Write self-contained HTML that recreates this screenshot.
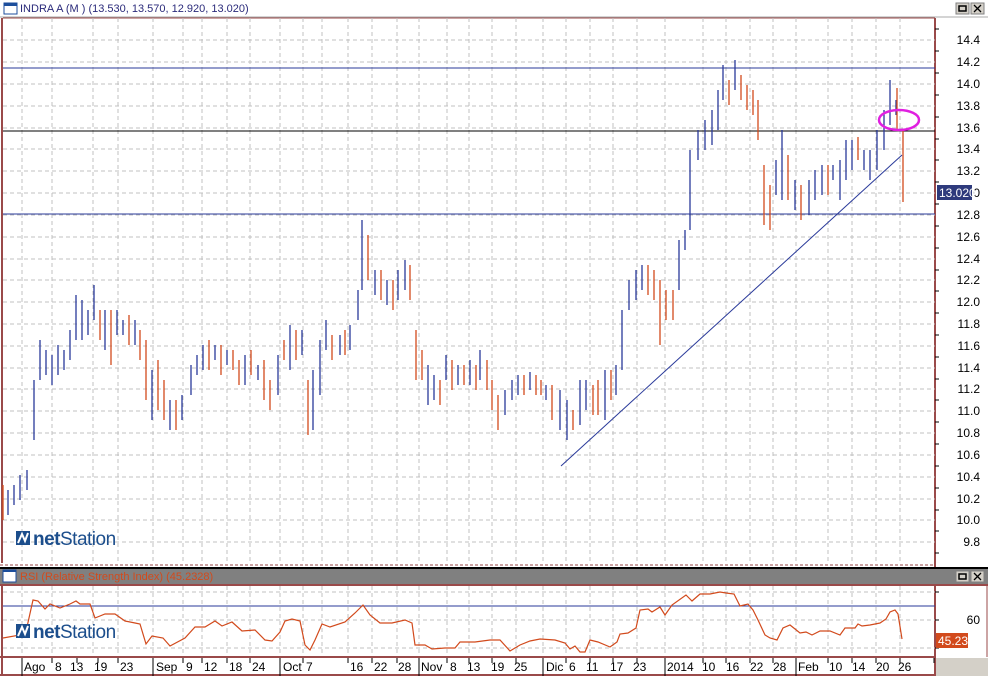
<!DOCTYPE html>
<html><head><meta charset="utf-8"><style>
body{margin:0;width:988px;height:676px;overflow:hidden;background:#fff;font-family:"Liberation Sans",sans-serif}
svg{display:block}
</style></head><body>
<svg width="988" height="676" viewBox="0 0 988 676" xmlns="http://www.w3.org/2000/svg" font-family="Liberation Sans, sans-serif">
<rect width="988" height="676" fill="#fff"/>
<!-- title bar -->
<rect x="4" y="3" width="13" height="11" fill="#fff" stroke="#1c4e9c" stroke-width="1"/>
<rect x="4" y="3" width="13" height="3" fill="#1c4e9c"/>
<text x="20" y="12" font-size="11" fill="#2a2a7a">INDRA A (M ) (13.530, 13.570, 12.920, 13.020)</text>
<g stroke="#808080" fill="#d4d0c8"><rect x="956" y="3" width="13" height="11"/><rect x="971" y="3" width="13" height="11"/></g>
<rect x="959" y="6" width="7" height="5" fill="none" stroke="#000" stroke-width="1.5"/>
<path d="M974 5l7 7M981 5l-7 7" stroke="#000" stroke-width="1.3"/>
<line x1="0" y1="17" x2="988" y2="17" stroke="#aaa"/>
<line x1="3" y1="18" x2="935" y2="18" stroke="#9a4a4a"/>
<line x1="2" y1="18" x2="2" y2="563" stroke="#9a4a4a" stroke-width="2"/>
<line x1="935" y1="18" x2="935" y2="676" stroke="#9a4a4a" stroke-width="2"/>
<!-- grid -->
<g stroke="#c0c0c0" stroke-dasharray="4,3" stroke-width="1">
<path d="M22 18V563M52 18V563M93 18V563M118 18V563M153 18V563M183 18V563M202 18V563M227 18V563M250 18V563M280 18V563M303 18V563M322 18V563M348 18V563M372 18V563M397 18V563M419 18V563M447 18V563M469 18V563M492 18V563M516 18V563M543 18V563M566 18V563M590 18V563M613 18V563M637 18V563M665 18V563M703 18V563M726 18V563M750 18V563M773 18V563M796 18V563M828 18V563M852 18V563M876 18V563M900 18V563"/>
<path d="M3 40H935M3 62H935M3 84H935M3 106H935M3 128H935M3 149H935M3 171H935M3 193H935M3 215H935M3 237H935M3 259H935M3 280H935M3 302H935M3 324H935M3 346H935M3 368H935M3 389H935M3 411H935M3 433H935M3 455H935M3 477H935M3 499H935M3 520H935M3 542H935"/>
<path d="M22 586V657M52 586V657M93 586V657M118 586V657M153 586V657M183 586V657M202 586V657M227 586V657M250 586V657M280 586V657M303 586V657M322 586V657M348 586V657M372 586V657M397 586V657M419 586V657M447 586V657M469 586V657M492 586V657M516 586V657M543 586V657M566 586V657M590 586V657M613 586V657M637 586V657M665 586V657M703 586V657M726 586V657M750 586V657M773 586V657M796 586V657M828 586V657M852 586V657M876 586V657M900 586V657"/>
<path d="M3 592H935M3 620H935M3 648H935"/>
</g>
<line x1="0" y1="565" x2="935" y2="565" stroke="#9a4a4a" stroke-dasharray="3,2"/>
<!-- price axis -->
<g font-size="12" fill="#000" text-anchor="end">
<text x="980" y="44">14.4</text><text x="980" y="66">14.2</text><text x="980" y="88">14.0</text><text x="980" y="110">13.8</text><text x="980" y="132">13.6</text><text x="980" y="153">13.4</text><text x="980" y="175">13.2</text><text x="980" y="197">13.0</text><text x="980" y="219">12.8</text><text x="980" y="241">12.6</text><text x="980" y="263">12.4</text><text x="980" y="284">12.2</text><text x="980" y="306">12.0</text><text x="980" y="328">11.8</text><text x="980" y="350">11.6</text><text x="980" y="372">11.4</text><text x="980" y="393">11.2</text><text x="980" y="415">11.0</text><text x="980" y="437">10.8</text><text x="980" y="459">10.6</text><text x="980" y="481">10.4</text><text x="980" y="503">10.2</text><text x="980" y="524">10.0</text><text x="980" y="546">9.8</text>
</g>
<g stroke="#000"><path d="M935 29h4M935 51h4M935 73h4M935 95h4M935 117h4M935 139h4M935 160h4M935 182h4M935 204h4M935 226h4M935 248h4M935 270h4M935 291h4M935 313h4M935 335h4M935 357h4M935 379h4M935 400h4M935 422h4M935 444h4M935 466h4M935 488h4M935 510h4M935 531h4M935 553h4"/></g>
<rect x="937" y="185" width="35" height="15" fill="#2e3a7c"/>
<text x="939" y="197" font-size="12" fill="#fff">13.020</text>
<!-- level lines -->
<line x1="3" y1="68" x2="935" y2="68" stroke="#2a3a9a"/>
<line x1="3" y1="131" x2="935" y2="131" stroke="#000"/>
<line x1="3" y1="214" x2="935" y2="214" stroke="#2a3a9a"/>
<line x1="561" y1="466" x2="902" y2="155" stroke="#2a3a9a"/>
<!-- bars -->
<path fill="none" stroke="#2a3a9a" stroke-width="1.3" d="M8 490V515M14 485V505M20 475V500M27 470V490M34 380V440M40 340V380M46 350V375M52 355V385M58 345V375M64 350V370M70 330V360M76 295V340M82 300V340M88 310V335M94 285V320M105 310V350M117 310V335M123 320V335M135 320V345M152 370V420M170 400V430M182 395V420M191 365V395M197 355V375M203 345V370M215 345V360M227 350V365M245 355V385M258 365V380M278 355V395M290 325V370M302 330V355M313 370V430M320 340V395M326 320V350M340 335V355M350 325V350M358 290V320M362 220V290M375 270V295M387 280V305M398 270V300M405 260V290M428 365V405M434 375V400M446 355V380M458 365V385M470 360V385M480 350V380M505 390V415M512 380V400M518 375V395M530 372V390M546 385V400M560 390V430M567 400V440M580 380V425M586 380V410M605 370V420M616 365V395M622 310V370M629 280V310M636 270V300M642 265V290M679 240V290M685 230V250M690 150V230M698 130V160M705 120V150M712 110V145M718 90V130M723 65V100M735 60V90M776 160V195M782 130V200M795 180V210M809 180V215M815 170V200M822 165V195M833 165V180M840 160V200M846 140V180M852 140V170M864 150V170M870 150V180M877 130V170M884 110V150M890 80V125M896 100V115"/>
<path fill="none" stroke="#d24a1c" stroke-width="1.3" d="M3 485V520M100 310V340M111 310V365M129 315V345M140 330V360M146 340V400M158 360V410M164 380V420M176 400V430M209 340V370M221 345V375M233 350V370M239 360V385M251 350V375M264 360V400M270 380V410M284 340V360M296 330V360M308 380V435M332 335V360M345 330V355M368 235V280M381 270V300M393 280V310M410 265V300M416 330V380M422 350V380M440 380V405M452 360V390M464 365V385M476 365V390M487 360V390M492 380V410M498 395V430M524 375V395M536 375V395M541 380V395M552 385V420M573 410V430M593 385V415M598 380V415M611 370V400M648 265V295M654 270V300M660 280V345M666 290V320M673 290V320M729 80V105M741 75V100M747 85V110M753 90V115M758 100V140M764 165V225M770 185V230M788 155V200M801 185V220M828 165V195M858 137V160M897 88V130M903 130V202"/>
<ellipse cx="899" cy="120" rx="20" ry="10" fill="none" stroke="#e020e0" stroke-width="2.5"/>
<!-- logo 1 -->
<g transform="translate(16,531)"><rect width="14" height="14" fill="#1c4e8c"/><path d="M2 12L6 3L9 10L12 2" stroke="#fff" stroke-width="2" fill="none"/></g>
<text x="33" y="545" font-size="19" fill="#1c4e8c" letter-spacing="-0.5"><tspan font-weight="bold">net</tspan>Station</text>
<!-- RSI header -->
<rect x="0" y="567" width="988" height="2" fill="#000"/>
<rect x="0" y="569" width="988" height="15" fill="#808080"/>
<rect x="3" y="570" width="13" height="12" fill="#fff" stroke="#1c4e9c"/>
<rect x="3" y="570" width="13" height="2" fill="#1c4e9c"/>
<text x="20" y="580" font-size="11" fill="#d24a1c">RSI (Relative Strength Index) (45.2328)</text>
<g stroke="#808080" fill="#d4d0c8"><rect x="956" y="571" width="13" height="11"/><rect x="971" y="571" width="13" height="11"/></g>
<rect x="959" y="574" width="7" height="5" fill="none" stroke="#000" stroke-width="1.5"/>
<path d="M974 573l7 7M981 573l-7 7" stroke="#000" stroke-width="1.3"/>
<line x1="0" y1="585" x2="935" y2="585" stroke="#9a4a4a" stroke-width="2"/>
<line x1="935" y1="585" x2="988" y2="585" stroke="#9a4a4a" stroke-width="2"/>
<line x1="987" y1="585" x2="987" y2="657" stroke="#9a4a4a"/>
<rect x="936" y="658" width="52" height="18" fill="#d4d0c8"/>
<line x1="3" y1="606" x2="935" y2="606" stroke="#2a3a9a"/>
<path d="M935 592h4M935 620h4M935 648h4" stroke="#000"/>
<text x="980" y="624" font-size="12" text-anchor="end">60</text>
<rect x="936" y="633" width="32" height="15" fill="#d24a1c"/>
<text x="938" y="645" font-size="12" fill="#fff">45.23</text>
<polyline fill="none" stroke="#d24a1c" stroke-width="1.2" points="3,638 20,635 27,627 33,600 38,601 45,609 50,604 60,608 70,604 76,601 80,604 90,604 95,618 105,614 115,614 125,621 135,623 140,624 146,644 152,636 163,638 170,646 185,638 195,627 205,627 215,621 222,626 232,622 242,631 255,630 265,640 272,641 280,632 285,621 292,619 300,621 305,645 310,650 315,640 322,624 330,627 345,622 355,613 363,605 370,615 380,623 392,623 405,620 412,623 415,645 425,645 432,649 445,648 455,648 460,642 475,642 490,640 500,640 510,651 520,645 530,641 540,639 555,640 565,643 570,649 575,646 580,652 585,652 590,640 598,642 610,647 617,642 620,634 628,633 636,628 640,610 648,609 652,612 660,607 665,615 672,605 686,595 692,601 700,594 710,594 720,592 726,593 734,594 740,606 748,604 753,610 758,620 765,635 770,638 777,640 783,628 790,625 800,633 806,632 812,635 820,631 830,631 840,635 845,628 855,628 858,624 862,626 870,625 880,623 886,619 890,612 895,610 898,614 902,639"/>
<g transform="translate(16,624)"><rect width="14" height="14" fill="#1c4e8c"/><path d="M2 12L6 3L9 10L12 2" stroke="#fff" stroke-width="2" fill="none"/></g>
<text x="33" y="638" font-size="19" fill="#1c4e8c" letter-spacing="-0.5"><tspan font-weight="bold">net</tspan>Station</text>
<!-- time axis -->
<line x1="0" y1="657" x2="935" y2="657" stroke="#9a4a4a" stroke-width="2"/>
<line x1="0" y1="675" x2="935" y2="675" stroke="#9a4a4a" stroke-width="2"/>
<g stroke="#000"><path d="M22 658V676M153 658V676M280 658V676M419 658V676M543 658V676M665 658V676M796 658V676"/>
<path d="M52 658v5M77 658v5M98 658v5M118 658v5M183 658v5M202 658v5M227 658v5M250 658v5M303 658v5M348 658v5M372 658v5M397 658v5M447 658v5M469 658v5M492 658v5M516 658v5M566 658v5M590 658v5M613 658v5M637 658v5M703 658v5M726 658v5M750 658v5M773 658v5M828 658v5M852 658v5M876 658v5M900 658v5M934 658v5"/></g>
<g font-size="12" fill="#000">
<text x="24" y="671">Ago</text><text x="55" y="671">8</text><text x="70" y="671">13</text><text x="94" y="671">19</text><text x="120" y="671">23</text>
<text x="156" y="671">Sep</text><text x="186" y="671">9</text><text x="204" y="671">12</text><text x="229" y="671">18</text><text x="252" y="671">24</text>
<text x="283" y="671">Oct</text><text x="306" y="671">7</text><text x="350" y="671">16</text><text x="374" y="671">22</text><text x="398" y="671">28</text>
<text x="421" y="671">Nov</text><text x="450" y="671">8</text><text x="467" y="671">13</text><text x="491" y="671">19</text><text x="514" y="671">25</text>
<text x="546" y="671">Dic</text><text x="569" y="671">6</text><text x="586" y="671">11</text><text x="610" y="671">17</text><text x="633" y="671">23</text>
<text x="667" y="671">2014</text><text x="702" y="671">10</text><text x="726" y="671">16</text><text x="750" y="671">22</text><text x="773" y="671">28</text>
<text x="798" y="671">Feb</text><text x="829" y="671">10</text><text x="852" y="671">14</text><text x="876" y="671">20</text><text x="898" y="671">26</text>
</g>
<line x1="2" y1="586" x2="2" y2="676" stroke="#9a4a4a" stroke-width="2"/>
</svg>
</body></html>
